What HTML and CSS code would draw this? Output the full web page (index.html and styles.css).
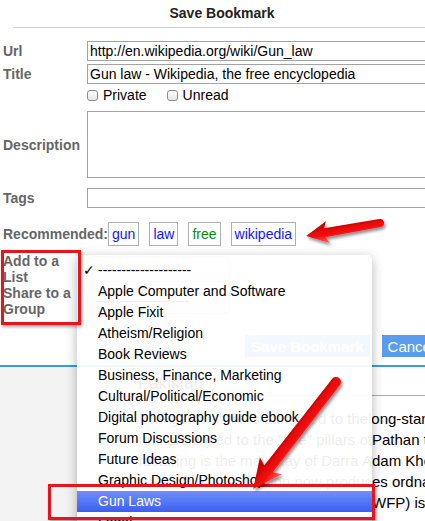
FILE: index.html
```html
<!DOCTYPE html>
<html lang="en">
<head>
  <meta charset="UTF-8" />
  <title>Save Bookmark</title>
  <link rel="stylesheet" href="styles.css">
</head>
<body>
  <div class="page">
    <h1 class="dlg-title">Save Bookmark</h1>

    <form class="bm-form">
      <div class="row row-url">
        <label>Url</label>
        <input type="text" value="http://en.wikipedia.org/wiki/Gun_law">
      </div>
      <div class="row row-title">
        <label>Title</label>
        <input type="text" value="Gun law - Wikipedia, the free encyclopedia">
      </div>
      <div class="row row-flags">
        <span class="spacer"></span>
        <span class="chk"><input type="checkbox" id="priv"><label for="priv">Private</label></span>
        <span class="chk chk-2"><input type="checkbox" id="unread"><label for="unread">Unread</label></span>
      </div>
      <div class="row row-desc">
        <label>Description</label>
        <textarea></textarea>
      </div>
      <div class="row row-tags">
        <label>Tags</label>
        <input type="text">
      </div>
      <div class="recommend">
        <span class="rec-label">Recommended:</span>
        <a class="tag">gun</a>
        <a class="tag">law</a>
        <a class="tag tag-green">free</a>
        <a class="tag">wikipedia</a>
      </div>
      <div class="row row-list">
        <label>Add to a List</label>
        <select class="pick"><option>--------------------</option></select>
      </div>
      <div class="row row-group">
        <label>Share to a Group</label>
        <select class="pick"><option>--------------------</option></select>
      </div>
      <div class="actions">
        <button type="button" class="btn btn-save">Save Bookmark</button>
        <button type="button" class="btn">Cancel</button>
      </div>
    </form>

    <div class="article">
      <div class="sidebar"></div>
      <div class="content">
        <h2>Pakistan</h2>
        <div class="text">
          <p class="line line-1"><span class="before">The gun culture is attributed to the </span><span>long-standing tribal</span></p>
          <p class="line"><span class="before">Guns are linked to the "five" pillars of </span><span>Pathan tribal</span></p>
          <p class="line"><span class="before">Small arms manufacturing is the mainstay of Darra A</span><span>dam Khel</span></p>
          <p class="line"><span class="before">The state ordnance division now produc</span><span>es ordnance</span></p>
          <p class="line"><span class="before">The Wah Ordnance Factories (</span><span>WFP) is the</span></p>
        </div>
      </div>
    </div>

    <!-- open select menu, drawn over the form -->
    <ul class="popup-menu">
      <li><span class="check">✓</span>--------------------</li>
      <li>Apple Computer and Software</li>
      <li>Apple Fixit</li>
      <li>Atheism/Religion</li>
      <li>Book Reviews</li>
      <li>Business, Finance, Marketing</li>
      <li>Cultural/Political/Economic</li>
      <li>Digital photography guide ebook</li>
      <li>Forum Discussions</li>
      <li>Future Ideas</li>
      <li>Graphic Design/Photoshop</li>
      <li class="hl">Gun Laws</li>
      <li>Legal</li>
    </ul>

    <div class="callout callout-labels"></div>
    <div class="callout callout-item"></div>

    <svg class="arrows" width="425" height="521" viewBox="0 0 425 521">
      <defs>
        <linearGradient id="redFill" x1="0" y1="0" x2="0" y2="1">
          <stop offset="0" stop-color="#ff6a6a"/>
          <stop offset="0.4" stop-color="#f20a0a"/>
          <stop offset="1" stop-color="#b80000"/>
        </linearGradient>
        <filter id="shadow" x="-30%" y="-30%" width="160%" height="160%">
          <feDropShadow dx="1.5" dy="2.5" stdDeviation="1.5" flood-color="#000" flood-opacity="0.45"/>
        </filter>
      </defs>
      <g filter="url(#shadow)">
        <path transform="translate(380 223) rotate(170)" fill="url(#redFill)"
              d="M0,-4 L56,-4.5 L53,-11 L75,0 L53,11 L56,4.5 L0,4 A4 4 0 0 1 0,-4 Z"/>
      </g>
      <g filter="url(#shadow)">
        <path transform="translate(336 382) rotate(127.8)" fill="url(#redFill)"
              d="M0,-5 L110,-5.5 L106,-14 L135,0 L106,14 L110,5.5 L0,5 A5 5 0 0 1 0,-5 Z"/>
      </g>
    </svg>
  </div>
</body>
</html>
```

FILE: styles.css
```css
html, body {
  margin: 0;
  padding: 0;
  background: #fff;
  overflow: hidden;
  font-family: "Liberation Sans", Arial, sans-serif;
}
.page {
  position: relative;
  width: 425px;
  height: 521px;
  overflow: hidden;
}
.dlg-title {
  margin: 0 0 0 13px;
  padding-left: 6px;
  height: 27px;
  line-height: 27px;
  font-size: 14px;
  font-weight: bold;
  text-align: center;
  color: #222;
  border-bottom: 1px solid #d2d2d2;
}

/* form rows */
.bm-form {
  padding: 0 0 8px 3px;
  border-bottom: 2px solid #3a98e6;
}
.row {
  display: flex;
  align-items: center;
  margin-top: 3px;
}
.row > label,
.rec-label {
  flex: 0 0 84px;
  font-size: 14px;
  font-weight: bold;
  line-height: 16px;
  color: #666;
}
.row input[type="text"],
.row textarea {
  flex: 0 0 420px;
  box-sizing: border-box;
  height: 20px;
  margin: 0;
  padding: 0 2px;
  border: 1px solid #a3a3a3;
  font: 14px "Liberation Sans", Arial, sans-serif;
  color: #000;
  background: #fff;
}
.row-url { margin-top: 13px; }
.row-flags {
  margin-top: 3px;
  height: 16px;
  font-size: 14px;
}
.spacer { flex: 0 0 84px; }
.chk {
  display: flex;
  align-items: center;
  color: #000;
}
.chk input {
  appearance: none;
  -webkit-appearance: none;
  width: 11px;
  height: 11px;
  margin: 0 5px 0 0;
  border: 1px solid #8c8c8c;
  border-radius: 3px;
  background: linear-gradient(#fff, #e6e6e6);
  box-sizing: border-box;
}
.chk-2 { margin-left: 20px; }
.row-desc { margin-top: 8px; }
.row textarea {
  height: 67px;
  resize: none;
}
.row-tags { margin-top: 10px; }

.recommend {
  display: flex;
  align-items: center;
  margin-top: 14px;
  height: 24px;
}
.rec-label { flex: none; }
.tag {
  box-sizing: border-box;
  height: 24px;
  line-height: 22px;
  padding: 0 3px;
  margin-right: 10px;
  border: 1px solid #b0b0b0;
  font-size: 14px;
  color: #1414ff;
}
.tag-green { color: #0b8a0b; }

.row-list { margin-top: 7px; }
.row-group { margin-top: 0; }
.pick {
  appearance: none;
  -webkit-appearance: none;
  width: 143px;
  height: 26px;
  margin: 0;
  padding: 0 8px;
  border: 1px solid #b4b4c4;
  border-radius: 5px;
  background: linear-gradient(#fff, #ececec);
  font: 14px "Liberation Sans", Arial, sans-serif;
}

.actions {
  display: flex;
  gap: 12px;
  margin-top: 18px;
  padding-left: 242px;
}
.btn {
  flex: none;
  height: 22px;
  margin: 0;
  padding: 0 6px;
  border: none;
  background: #5b9cef;
  color: #fff;
  font: 15px "Liberation Sans", Arial, sans-serif;
}
.btn-save { font-weight: bold; }

/* page content behind the dialog */
.article {
  display: flex;
  height: 160px;
}
.sidebar {
  flex: 0 0 100px;
  background: #f3f3f3;
}
.content {
  flex: 1;
  padding-left: 38px;
  min-width: 0;
}
.content h2 {
  margin: 6px 0 0;
  font-size: 17px;
  font-weight: normal;
  line-height: 22px;
  color: #000;
  border-bottom: 1px solid #aaa;
}
.text { margin-top: 12px; }
.line {
  display: flex;
  margin: 0;
  font-size: 15px;
  line-height: 21px;
  white-space: nowrap;
  color: #000;
}
.before {
  flex: 0 0 234px;
  display: flex;
  justify-content: flex-end;
  overflow: hidden;
}
.line-1 .before { flex-basis: 230px; }

/* open popup menu */
.popup-menu {
  position: absolute;
  left: 77px;
  top: 255px;
  width: 295px;
  height: 290px;
  margin: 0;
  padding: 5px 0 0;
  list-style: none;
  background: rgba(255, 255, 255, 0.93);
  border-radius: 0 5px 0 0;
  box-shadow: 0 3px 12px rgba(0, 0, 0, 0.3);
  font-size: 14px;
}
.popup-menu li {
  height: 21px;
  line-height: 21px;
  padding-left: 21px;
  white-space: nowrap;
  color: #000;
}
.popup-menu .check {
  display: inline-block;
  width: 15px;
  margin-left: -15px;
  font-family: "DejaVu Sans", sans-serif;
  font-size: 14px;
  font-weight: bold;
}
.popup-menu .hl {
  background: linear-gradient(#6e91f8, #3b5ef2);
  color: #fff;
}

/* annotations */
.callout {
  position: absolute;
  box-sizing: border-box;
  border: 3px solid #e6141c;
  box-shadow: 1px 2px 3px rgba(0, 0, 0, 0.35);
}
.callout-labels {
  left: 1px;
  top: 250px;
  width: 80px;
  height: 75px;
}
.callout-item {
  left: 48px;
  top: 484px;
  width: 327px;
  height: 36px;
}
.arrows {
  position: absolute;
  left: 0;
  top: 0;
  pointer-events: none;
}
```
